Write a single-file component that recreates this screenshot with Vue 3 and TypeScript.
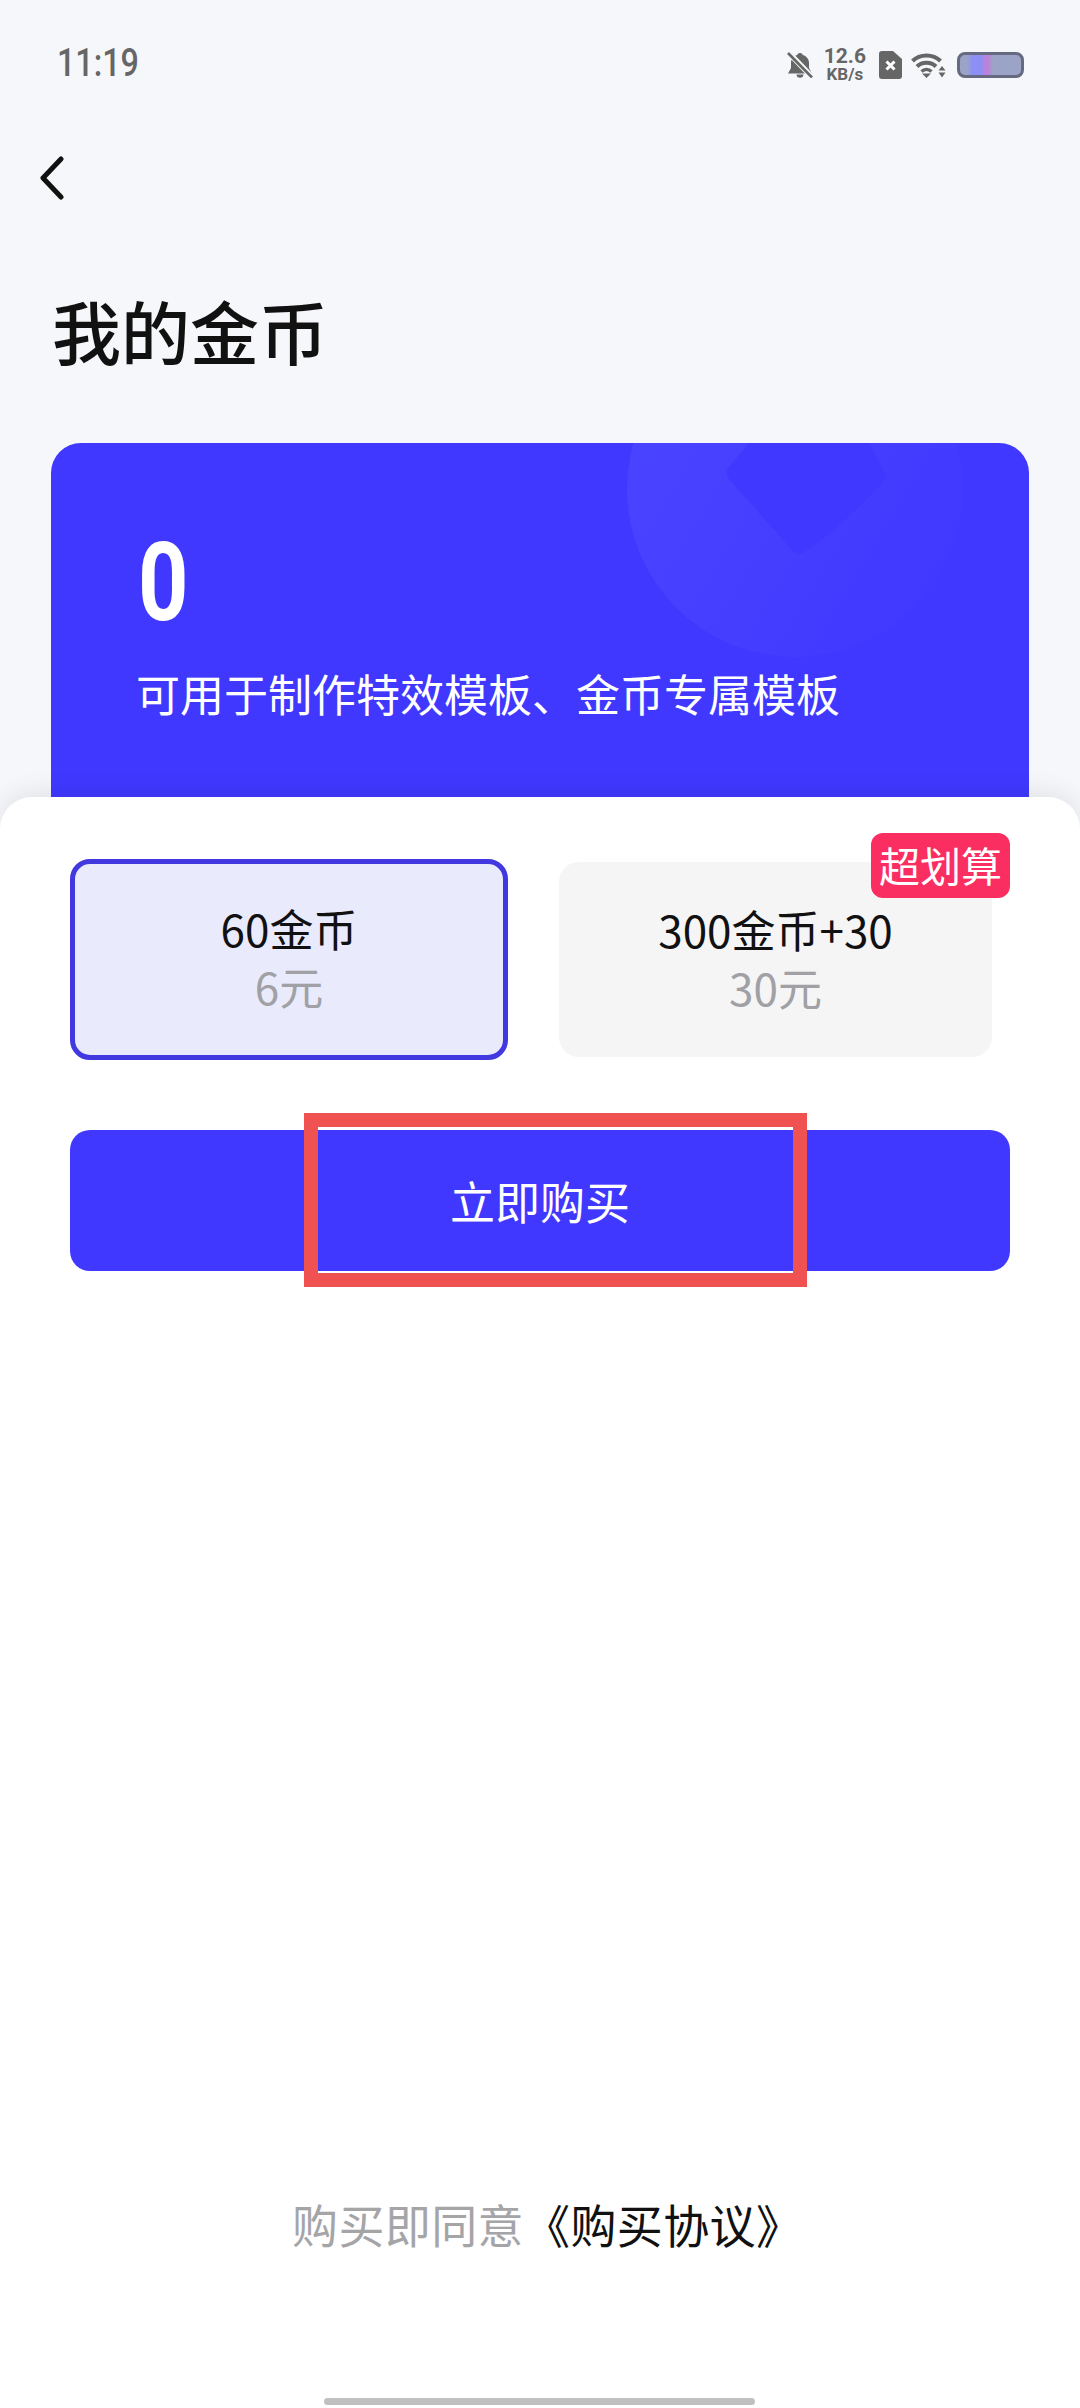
<script setup lang="ts">
// 购买选项
interface CoinOption {
  title: string
  price: string
  selected?: boolean
  tag?: string
}

const options: CoinOption[] = [
  { title: '60金币', price: '6元', selected: true },
  { title: '300金币+30', price: '30元', tag: '超划算' },
]
</script>

<template>
  <div class="page">
    <div class="status-bar">
      <span class="time">11:19</span>
      <div class="status-icons">
        <svg class="bell" viewBox="0 0 26 26" width="26" height="26">
          <path d="M13 1c1.500 0 2.500.8 2.800 2C20 4.200 22 7.500 22 11v5l3 5.500H1L4 16v-5C4 7.500 6 4.200 10.200 3 10.500 1.800 11.500 1 13 1zM9.500 22.500h7c0 2-1.500 3.300-3.500 3.300S9.500 24.500 9.500 22.500z" fill="#666" />
          <path d="M1 0l24 25" stroke="#f6f7fa" stroke-width="5.500" />
          <path d="M1 1l24 24.500" stroke="#666" stroke-width="2.600" />
        </svg>
        <div class="speed">
          <span class="speed-num">12.6</span>
          <span class="speed-unit">KB/s</span>
        </div>
        <svg class="sim" viewBox="0 0 23 28" width="23" height="28">
          <path d="M3 0h11l9 8v17a3 3 0 0 1-3 3H3a3 3 0 0 1-3-3V3a3 3 0 0 1 3-3z" fill="#666" />
          <path d="M7.500 10.500l8 8M15.500 10.500l-8 8" stroke="#fff" stroke-width="3" />
        </svg>
        <svg class="wifi" viewBox="0 0 35 26" width="35" height="26">
          <path d="M1.500 9C9 1.500 22 1.500 29.500 9" fill="none" stroke="#666" stroke-width="4" />
          <path d="M6 14.500c5-5 14-5 19 0" fill="none" stroke="#666" stroke-width="4" />
          <path d="M10.500 19.500c3-2.800 7-2.800 10 0" fill="none" stroke="#666" stroke-width="3.400" />
          <path d="M11 21.500h9l-4.500 4.500z" fill="#666" />
          <path d="M27.500 18.500h7l-3.500-4.500zM27.500 20.500h7l-3.500 5z" fill="#666" />
        </svg>
        <div class="battery" />
      </div>
    </div>

    <div class="nav">
      <svg viewBox="0 0 26 44" width="26" height="44">
        <path d="M22 3L4 22l18 19" fill="none" stroke="#111" stroke-width="5" stroke-linecap="round" stroke-linejoin="round" />
      </svg>
    </div>

    <h1 class="title">我的金币</h1>

    <div class="coin-card">
      <svg class="coin-deco" viewBox="0 0 340 230" width="340" height="230">
        <defs>
          <linearGradient id="decoFill" x1="0" y1="0" x2="1" y2="0.6">
            <stop offset="0" stop-color="#4b44ff" />
            <stop offset="0.55" stop-color="#463fff" />
            <stop offset="1" stop-color="#4139ff" />
          </linearGradient>
        </defs>
        <circle cx="168" cy="46" r="168" fill="url(#decoFill)" />
        <path d="M122 0h120l18 34c-24 28-52 54-84 76-4 1-8 0-12-4L102 36c-3-4-3-8 0-12z" fill="#4038ff" />
      </svg>
      <div class="coin-num">0</div>
      <div class="coin-desc">可用于制作特效模板、金币专属模板</div>
    </div>

    <div class="sheet">
      <div class="options">
        <div
          v-for="item in options"
          :key="item.title"
          class="option"
          :class="{ 'option--active': item.selected }"
        >
          <span v-if="item.tag" class="option-tag">{{ item.tag }}</span>
          <div class="option-title">{{ item.title }}</div>
          <div class="option-price">{{ item.price }}</div>
        </div>
      </div>

      <div class="buy-btn">
        立即购买
        <span class="highlight" />
      </div>

      <div class="agreement">
        <span class="agreement-gray">购买即同意</span>《购买协议》
      </div>
      <div class="home-bar" />
    </div>
  </div>
</template>

<style scoped>
.page {
  width: 1080px;
  height: 2408px;
  display: flex;
  flex-direction: column;
  background: #f6f7fa;
  font-family: "Noto Sans CJK SC", "Noto Sans", sans-serif;
  color: #111;
  overflow: hidden;
}

.status-bar {
  height: 126px;
  flex: none;
  box-sizing: border-box;
  padding: 44px 57px 0;
  display: flex;
  justify-content: space-between;
  align-items: flex-start;
}

.time {
  font-family: Roboto, sans-serif;
  font-size: 38px;
  line-height: 38px;
  font-weight: 500;
  color: #666;
  transform: scaleX(0.85);
  transform-origin: left center;
}

.status-icons {
  display: flex;
  align-items: center;
  margin-top: 2px;
  margin-right: -1px;
}

.speed {
  display: flex;
  flex-direction: column;
  align-items: center;
  margin-left: 11px;
  margin-right: 13px;
  font-family: Roboto, sans-serif;
  font-weight: 700;
  color: #666;
}

.speed-num {
  font-size: 21px;
  line-height: 20px;
}

.speed-unit {
  font-size: 17px;
  line-height: 17px;
}

.wifi {
  margin-left: 9px;
  margin-right: 11px;
}

.battery {
  width: 67px;
  height: 26px;
  box-sizing: border-box;
  border: 3px solid #666a80;
  border-radius: 8px;
  background: linear-gradient(90deg, #9ba3c6 0 12%, #8c90f5 20%, #8c90f5 34%, #b884de 42%, #c080d8 46%, #9ba3c6 54%);
}

.nav {
  height: 44px;
  flex: none;
  padding: 30px 0 0 39px;
}

.title {
  margin: 85px 0 0 52px;
  height: 90px;
  font-size: 69px;
  line-height: 90px;
  font-weight: 500;
}

.coin-card {
  position: relative;
  flex: none;
  margin: 68px 51px 0;
  height: 354px;
  box-sizing: border-box;
  padding: 85px 0 0 85px;
  border-radius: 30px 30px 0 0;
  background: #4038ff;
  color: #fff;
  overflow: hidden;
}

.coin-deco {
  position: absolute;
  top: 0;
  left: 576px;
}

.coin-num {
  position: relative;
  margin-left: 2px;
  font-family: Roboto, sans-serif;
  font-size: 110px;
  line-height: 110px;
  font-weight: 700;
  width: 60px;
  transform: scaleX(0.8);
  transform-origin: left center;
}

.coin-desc {
  position: relative;
  margin-top: 25px;
  font-size: 44px;
  line-height: 60px;
}

.sheet {
  position: relative;
  flex: 1;
  display: flex;
  flex-direction: column;
  border-radius: 32px 32px 0 0;
  background: #fff;
  box-shadow: 0 -6px 24px rgba(0, 0, 0, 0.08);
  padding: 0 70px;
}

.options {
  display: flex;
  justify-content: space-between;
  align-items: center;
  margin-top: 62px;
}

.option {
  position: relative;
  width: 433px;
  height: 195px;
  box-sizing: border-box;
  margin-right: 18px;
  border-radius: 20px;
  background: #f5f5f5;
  text-align: center;
}

.option--active {
  width: 438px;
  height: 201px;
  margin-right: 0;
  border: 5px solid #4238e0;
  background: #e9ebfd;
}

.option-title {
  padding-top: 38px;
  font-size: 44px;
  line-height: 58px;
}

.option--active .option-title {
  padding-top: 35px;
}

.option-price {
  font-size: 44px;
  line-height: 58px;
  color: #a0a0a5;
}

.option-tag {
  position: absolute;
  top: -29px;
  right: -18px;
  width: 139px;
  height: 65px;
  border-radius: 12px;
  background: #fb2e62;
  color: #fff;
  font-size: 41px;
  line-height: 62px;
}

.buy-btn {
  position: relative;
  height: 141px;
  margin-top: 70px;
  border-radius: 20px;
  background: #4038ff;
  color: #fff;
  font-size: 45px;
  line-height: 141px;
  text-align: center;
}

/* 截图上的红色标注框 */
.highlight {
  position: absolute;
  top: -17px;
  left: 234px;
  width: 503px;
  height: 174px;
  box-sizing: border-box;
  border: 14px solid #f05252;
}

.agreement {
  margin-top: auto;
  margin-left: 222px;
  font-size: 46px;
  letter-spacing: 0.4px;
  line-height: 60px;
  white-space: nowrap;
}

.agreement-gray {
  color: #a5a5a8;
}

.home-bar {
  width: 431px;
  height: 7px;
  margin: 145px 0 3px 254px;
  border-radius: 4px;
  background: #c0c0c0;
}
</style>

<style>
html,
body {
  margin: 0;
  background: #f6f7fa;
}
</style>
